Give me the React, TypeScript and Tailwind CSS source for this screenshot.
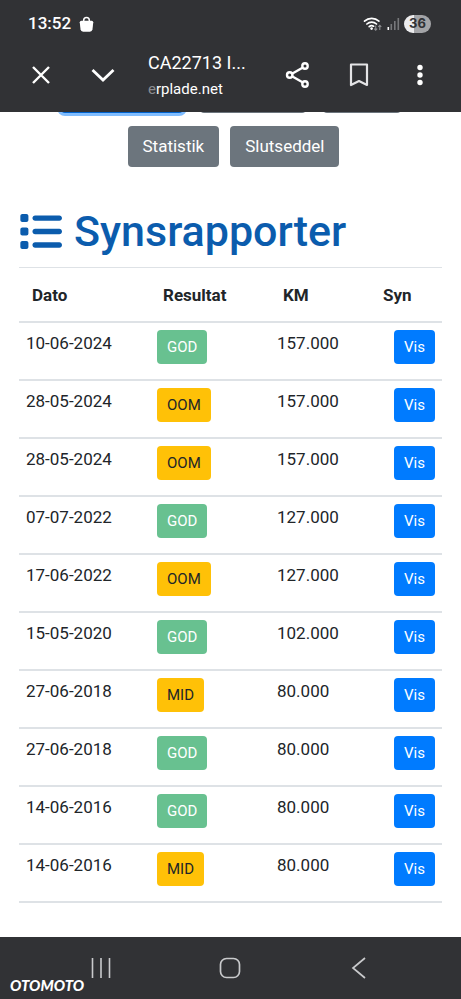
import React from 'react';
import { FaList } from 'react-icons/fa6';

type Result = 'GOD' | 'OOM' | 'MID';

interface Report {
    date: string;
    result: Result;
    km: string;
}

const reports: Report[] = [
    { date: '10-06-2024', result: 'GOD', km: '157.000' },
    { date: '28-05-2024', result: 'OOM', km: '157.000' },
    { date: '28-05-2024', result: 'OOM', km: '157.000' },
    { date: '07-07-2022', result: 'GOD', km: '127.000' },
    { date: '17-06-2022', result: 'OOM', km: '127.000' },
    { date: '15-05-2020', result: 'GOD', km: '102.000' },
    { date: '27-06-2018', result: 'MID', km: '80.000' },
    { date: '27-06-2018', result: 'GOD', km: '80.000' },
    { date: '14-06-2016', result: 'GOD', km: '80.000' },
    { date: '14-06-2016', result: 'MID', km: '80.000' },
];

const badgeColors: Record<Result, string> = {
    GOD: 'bg-[#68c190] text-white',
    OOM: 'bg-[#ffc107] text-[#212529]',
    MID: 'bg-[#ffc107] text-[#212529]',
};

function StatusBar() {
    return (
        <div className="flex h-12 items-center justify-between pl-7 pr-[30px]">
            <div className="flex items-center gap-2 text-[17px] font-medium">
                <span>13:52</span>
                <svg width="15" height="17" viewBox="0 0 16 18" aria-hidden="true">
                    <path d="M5 6V4.5a3 3 0 0 1 6 0V6" fill="none" stroke="currentColor" strokeWidth="1.6" />
                    <path d="M2.5 5h11q1.6 0 1.7 1.6l-.8 7.4q-.4 2.6-2.8 2.6H4.4q-2.4 0-2.8-2.6L.8 6.6Q.9 5 2.5 5z" fill="currentColor" />
                </svg>
            </div>
            <div className="flex items-center gap-1">
                <svg width="20" height="16" viewBox="0 0 20 16" fill="none" aria-hidden="true">
                    <g stroke="currentColor" strokeWidth="1.7" strokeLinecap="round">
                        <path d="M1.5 5.2a10.5 10.5 0 0 1 14.4 0" />
                        <path d="M3.9 8a7 7 0 0 1 9.6 0" />
                        <path d="M6.2 10.6a3.7 3.7 0 0 1 4.4-.4" />
                    </g>
                    <circle cx="8.6" cy="12.6" r="1.3" fill="currentColor" />
                    <path d="M12.7 9.5v4.7m-1.5-1.5 1.5 1.5 1.5-1.5M16.8 14V9.3m-1.5 1.5 1.5-1.5 1.5 1.5" stroke="#8d8e91" strokeWidth="1.1" />
                </svg>
                <svg width="13" height="14" viewBox="0 0 13 14" aria-hidden="true">
                    <rect x="0.5" y="10" width="1.6" height="3" fill="#ffffff" />
                    <rect x="3.5" y="7" width="1.6" height="6" fill="#77787b" />
                    <rect x="7" y="4" width="1.6" height="9" fill="#77787b" />
                    <rect x="10.5" y="1" width="1.6" height="12" fill="#77787b" />
                </svg>
                <span className="flex h-[18px] w-[27px] items-center justify-center rounded-full bg-linear-to-r from-[#ececee] from-36% to-[#a3a4a7] to-36% font-['Inter',sans-serif] text-[13px] font-bold text-[#313235]">
                    36
                </span>
            </div>
        </div>
    );
}

function BrowserBar() {
    return (
        <div className="flex h-16 items-center pb-[10px]">
            <button aria-label="Luk" className="flex w-[82px] justify-center">
                <svg width="20" height="20" viewBox="0 0 20 20" fill="none" stroke="currentColor" strokeWidth="2.4">
                    <path d="M2 2l16 16M18 2L2 18" />
                </svg>
            </button>
            <button aria-label="Minimer" className="flex w-[42px] justify-center">
                <svg width="26" height="20" viewBox="0 0 26 20" fill="none" stroke="currentColor" strokeWidth="2.8">
                    <path d="M2.5 5L13 15 23.500 5" />
                </svg>
            </button>
            <div className="ml-6 flex min-w-0 flex-1 flex-col">
                <span className="text-lg leading-7">CA22713 I...</span>
                <span className="text-[15px] leading-6">
                    <span className="text-[#8b8c8f]">e</span>rplade.net
                </span>
            </div>
            <button aria-label="Del" className="flex w-[61px] justify-center">
                <svg width="26" height="28" viewBox="0 0 26 28" fill="none" stroke="currentColor" strokeWidth="2.4">
                    <path d="M7 12.7l10.5-6M7 15.3l10.5 6" />
                    <circle cx="4.7" cy="14" r="2.7" />
                    <circle cx="20" cy="5" r="2.7" />
                    <circle cx="20" cy="23" r="2.7" />
                </svg>
            </button>
            <button aria-label="Bogmærke" className="flex w-[61px] justify-center">
                <svg width="20" height="24" viewBox="0 0 20 24" fill="none" stroke="#e4e4e6" strokeWidth="2.2" strokeLinejoin="round">
                    <path d="M2 1.5h16V22l-8-4-8 4z" />
                </svg>
            </button>
            <button aria-label="Mere" className="mr-[11px] flex w-[61px] justify-center">
                <svg width="6" height="22" viewBox="0 0 6 22" fill="currentColor">
                    <circle cx="3" cy="3.5" r="2.7" />
                    <circle cx="3" cy="11" r="2.7" />
                    <circle cx="3" cy="18.5" r="2.7" />
                </svg>
            </button>
        </div>
    );
}

function ReportTable() {
    return (
        <table className="w-full table-fixed border-separate border-spacing-0 text-[17px] leading-[26px]">
            <thead>
                <tr className="h-14 text-left">
                    <th className="w-[131px] border-t border-b-2 border-[#dee2e6] pl-[13px] font-bold">Dato</th>
                    <th className="w-[120px] border-t border-b-2 border-[#dee2e6] pl-[13px] font-bold">Resultat</th>
                    <th className="w-[100px] border-t border-b-2 border-[#dee2e6] pl-[13px] font-bold">KM</th>
                    <th className="border-t border-b-2 border-[#dee2e6] pl-[13px] font-bold">Syn</th>
                </tr>
            </thead>
            <tbody>
                {reports.map((report, i) => (
                    <tr key={i} className="h-[58px] align-top">
                        <td className="border-b-2 border-[#dee2e6] px-[7px] pt-[7px]">{report.date}</td>
                        <td className="border-b-2 border-[#dee2e6] px-[7px] pt-[7px]">
                            <span className={`flex h-[34px] w-fit items-center rounded px-[10px] text-[15px] ${badgeColors[report.result]}`}>
                                {report.result}
                            </span>
                        </td>
                        <td className="border-b-2 border-[#dee2e6] px-[7px] pt-[7px]">{report.km}</td>
                        <td className="border-b-2 border-[#dee2e6] px-[7px] pt-[7px]">
                            <button className="ml-auto flex h-[34px] items-center rounded bg-[#007bff] px-[10px] text-[15px] text-white">
                                Vis
                            </button>
                        </td>
                    </tr>
                ))}
            </tbody>
        </table>
    );
}

export default function App() {
    return (
        <div className="flex min-h-screen flex-col bg-white font-['Roboto',sans-serif] text-[#212529]">
            <header className="bg-[#313235] text-white">
                <StatusBar />
                <BrowserBar />
            </header>

            <main className="flex-1 pb-8">
                {/* Lower edge of the button row scrolled under the header */}
                <div className="flex h-[5px] items-end justify-center gap-[15px] overflow-hidden pb-1" aria-hidden="true">
                    <span className="h-10 w-31 shrink-0 rounded-[5px] bg-[#0062cc] ring-3 ring-[#80bdff]" />
                    <span className="h-10 w-27 shrink-0 rounded-[5px] bg-[#6c757d]" />
                    <span className="h-10 w-20 shrink-0 rounded-[5px] bg-[#6c757d]" />
                </div>

                <div className="mt-[9px] flex justify-center gap-[11px] pl-[6px]">
                    <button className="h-[41px] rounded bg-[#6c757d] px-[15px] text-[17px] text-white">Statistik</button>
                    <button className="h-[41px] rounded bg-[#6c757d] px-[15px] text-[17px] text-white">Slutseddel</button>
                </div>

                <section className="mt-9 px-[19px]">
                    <h1 className="mb-2 flex items-center gap-3 text-[43px] leading-[56px] font-medium text-[#0b5cad]">
                        <FaList aria-hidden="true" />
                        Synsrapporter
                    </h1>
                    <ReportTable />
                </section>
            </main>

            <footer className="relative bg-[#313235] text-[#c9cacc]">
                <nav className="flex h-[62px] items-center justify-between pl-[91px] pr-[92px]">
                    <button aria-label="Seneste">
                        <svg width="20" height="22" viewBox="0 0 20 22" fill="none" stroke="currentColor" strokeWidth="1.6">
                            <path d="M1.5 1v20M10 1v20M18.5 1v20" />
                        </svg>
                    </button>
                    <button aria-label="Hjem">
                        <svg width="22" height="22" viewBox="0 0 22 22" fill="none" stroke="currentColor" strokeWidth="1.7">
                            <rect x="1.5" y="1.5" width="19" height="19" rx="6" />
                        </svg>
                    </button>
                    <button aria-label="Tilbage">
                        <svg width="20" height="22" viewBox="0 0 20 22" fill="none" stroke="currentColor" strokeWidth="1.7">
                            <path d="M16 1L4 11l12 10" />
                        </svg>
                    </button>
                </nav>
                <span className="absolute bottom-1 left-[10px] font-['Lato',sans-serif] text-[15px] leading-5 font-black text-white italic">OTOMOTO</span>
            </footer>
        </div>
    );
}
